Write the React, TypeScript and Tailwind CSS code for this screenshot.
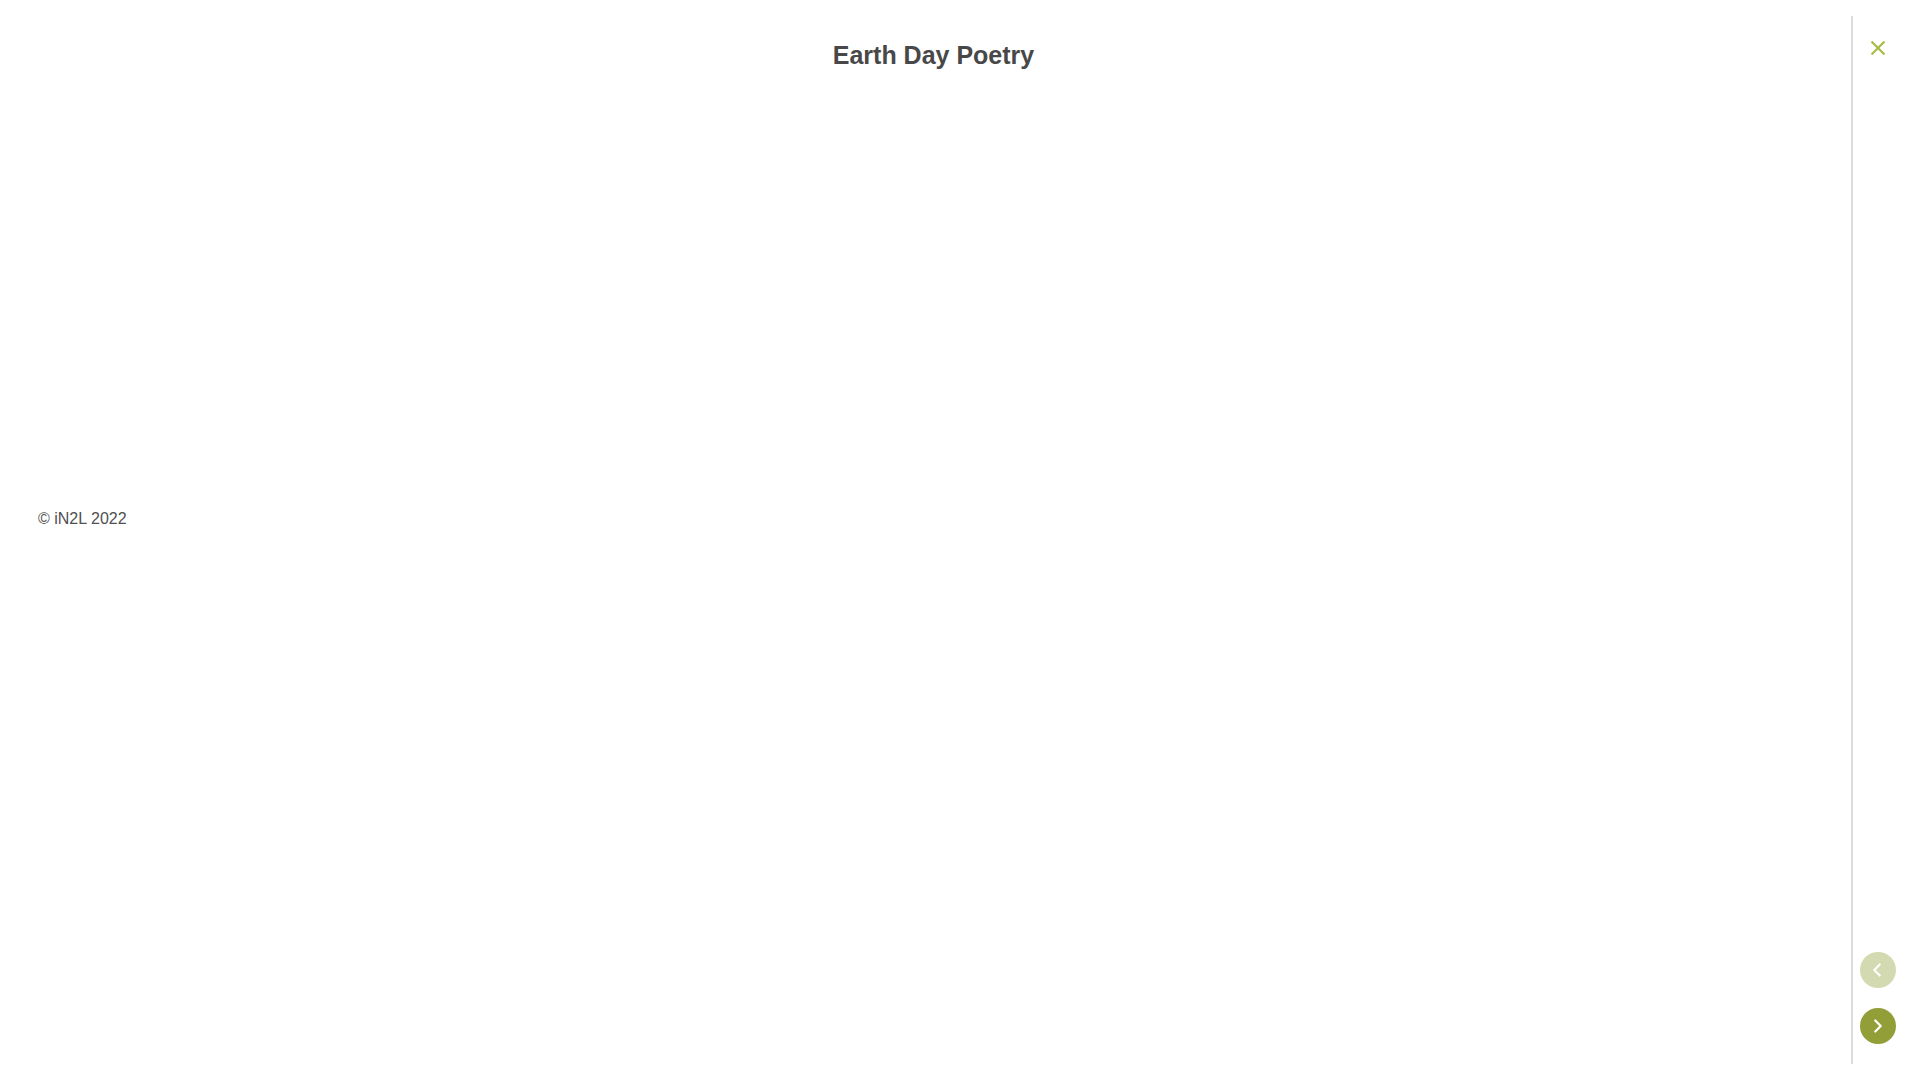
import { ChevronLeft, ChevronRight } from "lucide-react";

export default function App() {
  return (
    <div className="flex h-[1080px] w-[1920px] bg-white py-4 pl-4 font-['Liberation_Sans',Arial,sans-serif] text-[#484848]">
      <main className="flex w-[1835px] flex-col">
        <h1 className="mt-[24px] text-center text-[25px] leading-[30px] font-bold">Earth Day Poetry</h1>
        <p className="mt-[439px] pl-[22px] text-base leading-[20px] text-[#505050]">© iN2L 2022</p>
      </main>
      <aside className="w-[69px] border-l-2 border-[#dcdcdc] pl-[7px]">
        <div className="flex h-full w-9 flex-col items-center">
          <button className="mt-[24px] flex h-4 w-4 items-center justify-center">
            <svg viewBox="0 0 16 16" className="h-4 w-4" fill="none" stroke="#a9bb46" strokeWidth="2.2">
              <path d="M1.5 1.5 L14.5 14.5 M14.5 1.5 L1.5 14.5" />
            </svg>
          </button>
          <div className="mt-auto mb-[20px] flex flex-col gap-5">
            <button className="flex h-9 w-9 items-center justify-center rounded-full bg-[#d3dab1] text-white">
              <ChevronLeft size={22} strokeWidth={2.4} className="-translate-x-px" />
            </button>
            <button className="flex h-9 w-9 items-center justify-center rounded-full bg-[#929f38] text-white">
              <ChevronRight size={22} strokeWidth={2.4} />
            </button>
          </div>
        </div>
      </aside>
    </div>
  );
}
